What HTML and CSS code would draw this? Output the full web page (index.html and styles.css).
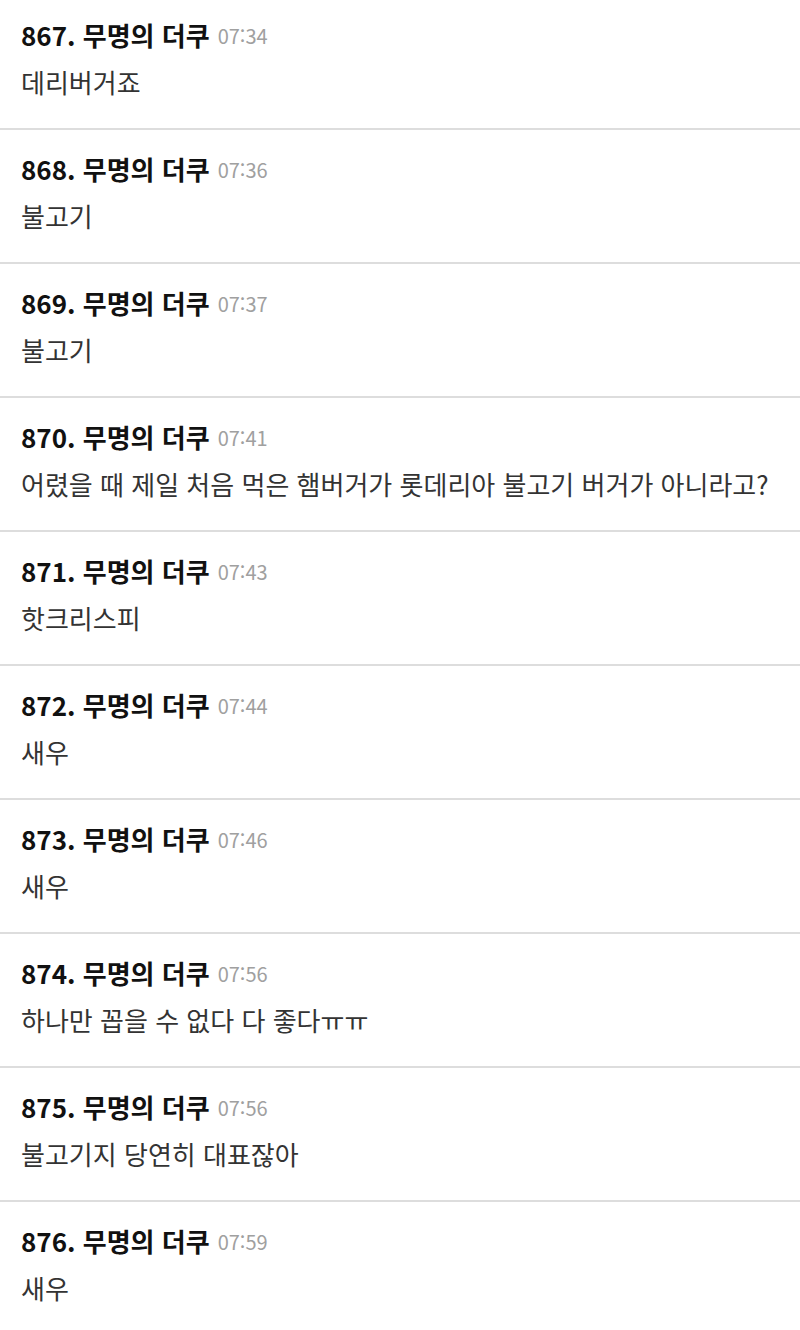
FILE: index.html
```html
<!DOCTYPE html>
<html lang="ko">
<head>
    <meta charset="UTF-8">
    <meta name="viewport" content="width=device-width, initial-scale=1.0">
    <title>댓글</title>
    <link rel="stylesheet" href="styles.css">
</head>
<body>
    <ul class="comments">
        <li class="comment">
            <div class="comment-head"><span class="comment-name">867. 무명의 더쿠</span><span class="comment-time">07:34</span></div>
            <p class="comment-text">데리버거죠</p>
        </li>
        <li class="comment">
            <div class="comment-head"><span class="comment-name">868. 무명의 더쿠</span><span class="comment-time">07:36</span></div>
            <p class="comment-text">불고기</p>
        </li>
        <li class="comment">
            <div class="comment-head"><span class="comment-name">869. 무명의 더쿠</span><span class="comment-time">07:37</span></div>
            <p class="comment-text">불고기</p>
        </li>
        <li class="comment">
            <div class="comment-head"><span class="comment-name">870. 무명의 더쿠</span><span class="comment-time">07:41</span></div>
            <p class="comment-text">어렸을 때 제일 처음 먹은 햄버거가 롯데리아 불고기 버거가 아니라고?</p>
        </li>
        <li class="comment">
            <div class="comment-head"><span class="comment-name">871. 무명의 더쿠</span><span class="comment-time">07:43</span></div>
            <p class="comment-text">핫크리스피</p>
        </li>
        <li class="comment">
            <div class="comment-head"><span class="comment-name">872. 무명의 더쿠</span><span class="comment-time">07:44</span></div>
            <p class="comment-text">새우</p>
        </li>
        <li class="comment">
            <div class="comment-head"><span class="comment-name">873. 무명의 더쿠</span><span class="comment-time">07:46</span></div>
            <p class="comment-text">새우</p>
        </li>
        <li class="comment">
            <div class="comment-head"><span class="comment-name">874. 무명의 더쿠</span><span class="comment-time">07:56</span></div>
            <p class="comment-text">하나만 꼽을 수 없다 다 좋다ㅠㅠ</p>
        </li>
        <li class="comment">
            <div class="comment-head"><span class="comment-name">875. 무명의 더쿠</span><span class="comment-time">07:56</span></div>
            <p class="comment-text">불고기지 당연히 대표잖아</p>
        </li>
        <li class="comment">
            <div class="comment-head"><span class="comment-name">876. 무명의 더쿠</span><span class="comment-time">07:59</span></div>
            <p class="comment-text">새우</p>
        </li>
    </ul>
</body>
</html>
```

FILE: styles.css
```css
body {
    margin: 0;
    background-color: #fff;
    font-family: "Noto Sans CJK KR", "Noto Sans", sans-serif;
}
.comments {
    list-style: none;
    margin: 0;
    padding: 0;
}
.comment {
    padding: 22px 21px 29px;
    border-bottom: 2px solid #ddd;
}
.comment:first-child {
    padding-top: 18px;
}
.comment:last-child {
    border-bottom: none;
}
.comment-head {
    display: flex;
    align-items: center;
    gap: 8px;
    height: 34px;
}
.comment-name {
    font-size: 26px;
    font-weight: bold;
    line-height: 34px;
    color: #111;
}
.comment-time {
    font-size: 20px;
    line-height: 34px;
    padding-top: 2px;
    color: #a0a0a0;
}
.comment-text {
    margin: 13px 0 0;
    height: 34px;
    font-size: 26px;
    line-height: 34px;
    color: #333;
}
```
